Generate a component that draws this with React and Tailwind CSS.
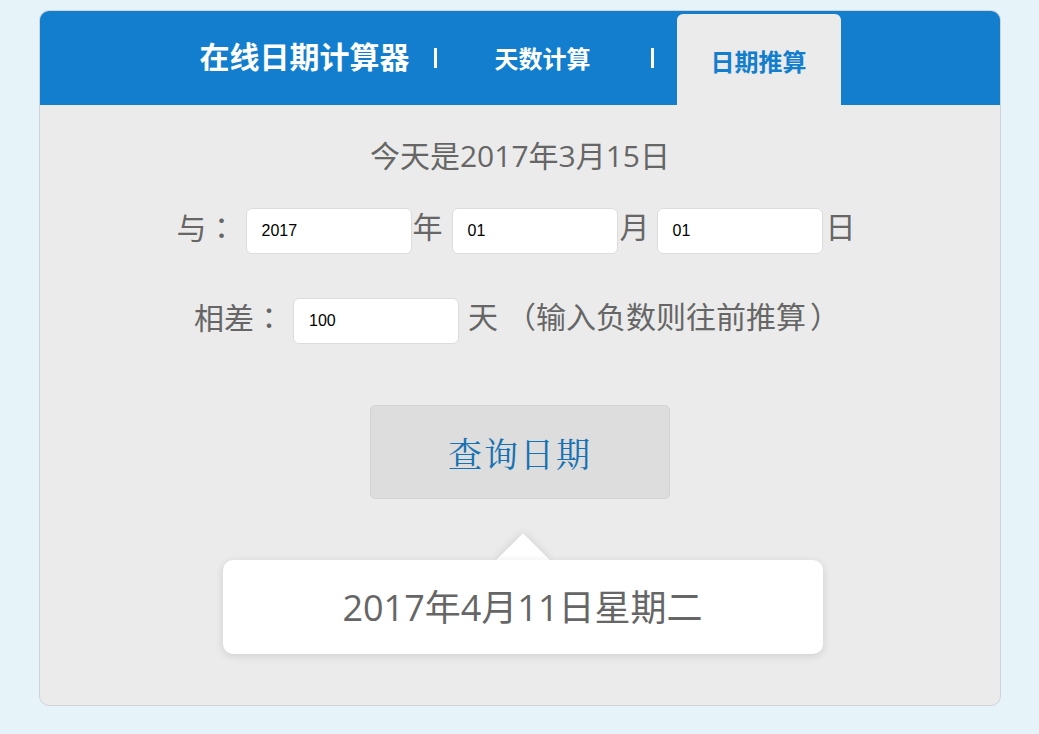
import React from "react";

const sans = { fontFamily: '"Open Sans", "Noto Sans CJK SC", sans-serif' };
const tc = { fontFamily: '"Noto Sans CJK TC", sans-serif' };

function Field({ value, className = "" }) {
  return (
    <div
      className={`w-[166px] h-[46px] shrink-0 bg-white border border-[#dcdcdc] rounded-[6px] flex items-center pl-[15px] text-[16px] text-black ${className}`}
      style={{ fontFamily: '"Liberation Sans", Arial, sans-serif' }}
    >
      {value}
    </div>
  );
}

export default function App() {
  return (
    <div className="w-[1039px] h-[734px] bg-[#e6f3f9] pt-[10px] pl-[39px]" style={sans}>
      <div className="w-[962px] h-[696px] border border-[#cfd3d6] rounded-[10px] overflow-hidden bg-[#ebebeb] flex flex-col">
        {/* header */}
        <div className="h-[94px] bg-[#127ecd] flex items-end justify-center shrink-0">
          <div className="flex items-center h-[94px]">
            <div className="text-white font-bold text-[30px] leading-none pb-[2px]">在线日期计算器</div>
            <div className="ml-[24px] w-[3px] h-[20px] bg-white" />
            <div className="ml-[58px] text-white font-bold text-[24px] leading-none pt-[2px]">天数计算</div>
            <div className="ml-[60px] w-[3px] h-[20px] bg-white" />
            <div className="ml-[23px] self-end w-[164px] h-[91px] bg-[#ebebeb] rounded-t-[6px] flex items-center justify-center">
              <span className="text-[#127ecd] font-bold text-[24px] leading-none pt-[5px]">日期推算</span>
            </div>
          </div>
        </div>

        {/* body */}
        <div className="flex flex-col items-center text-[#666666]">
          <div className="mt-[31px] h-[40px] leading-[40px] text-[30px]">今天是2017年3月15日</div>

          <div className="mt-[32px] flex items-center text-[30px] leading-none pr-[8px]">
            <span className="pb-[8px]">与<span style={tc}>：</span></span>
            <Field value="2017" className="ml-[9px]" />
            <span className="ml-[1px] pb-[8px]">年</span>
            <Field value="01" className="ml-[9px]" />
            <span className="ml-[2px] pb-[8px]">月</span>
            <Field value="01" className="ml-[7px]" />
            <span className="ml-[3px] pb-[8px]">日</span>
          </div>

          <div className="mt-[44px] flex items-center text-[30px] leading-none pr-[6px]">
            <span className="pb-[8px]">相差<span style={tc}>：</span></span>
            <Field value="100" className="ml-[9px]" />
            <span className="ml-[9px] pb-[8px] flex whitespace-nowrap">
              <span>天</span>
              <span className="w-[38px] text-right">（</span>
              <span>输入负数则往前推算</span>
              <span className="w-[34px] pl-[4px] text-left">）</span>
            </span>
          </div>

          <div
            className="mt-[61px] w-[300px] h-[94px] bg-[#dddddd] border border-[#d3d3d3] rounded-[5px] flex items-center justify-center text-[34px] text-[#1672b2] tracking-[2px]"
            style={{ fontFamily: '"Noto Serif CJK SC", "Noto Serif SC", "Liberation Serif", serif' }}
          >
            查询日期
          </div>

          <div className="relative mt-[61px] ml-[5px] w-[600px] h-[94px]">
            <div className="absolute left-[281px] top-[-19px] w-[38px] h-[38px] bg-white rotate-45 shadow-[0_0_10px_rgba(0,0,0,0.12)]" />
            <div className="relative w-full h-full bg-white rounded-[10px] shadow-[0_2px_8px_rgba(0,0,0,0.12)] flex items-center justify-center text-[36px] text-[#666666] pt-[2px]">
              2017年4月11日星期二
            </div>
          </div>
        </div>
      </div>
    </div>
  );
}
